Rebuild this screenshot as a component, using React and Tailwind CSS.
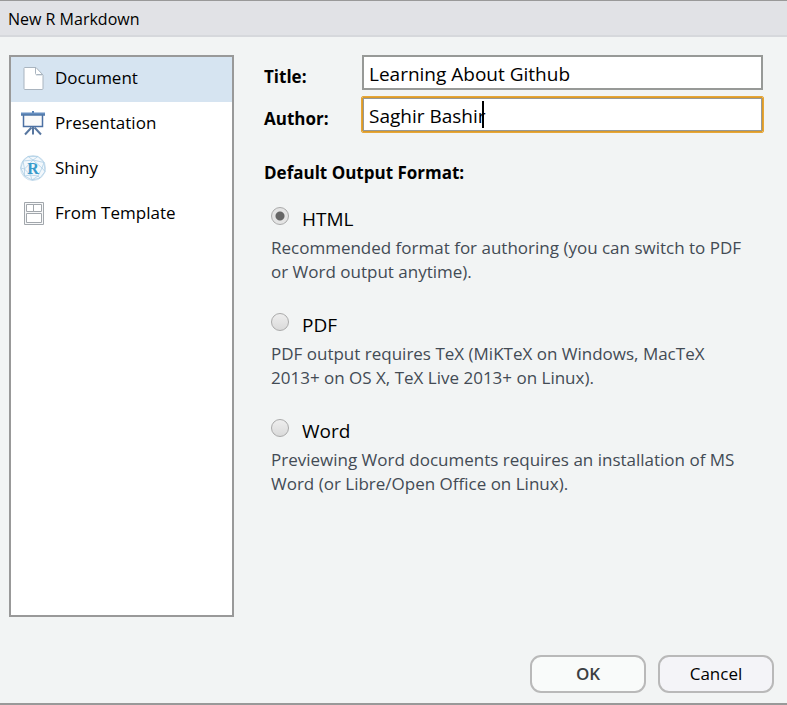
import { useState } from "react";

function DocumentIcon() {
  return (
    <svg width="26" height="26" viewBox="0 0 26 26" fill="none" aria-hidden="true">
      <path d="M4.500 2.500h11.500l7 7.500v13.500a1 1 0 0 1-1 1h-17a1 1 0 0 1-1-1v-20a1 1 0 0 1 .500-1z" fill="#fff" stroke="#a9b4bf" />
      <path d="M15.500 3v5.500a1 1 0 0 0 1 1h6" stroke="#a9b4bf" strokeLinejoin="round" />
      <path d="M16 10.500h6" stroke="#dfe5ea" />
    </svg>
  );
}

function PresentationIcon() {
  return (
    <svg width="26" height="26" viewBox="0 0 26 26" fill="none" aria-hidden="true">
      <path d="M12 1h2v2h-2z" fill="#5580b4" />
      <path d="M3.500 5v11.500h19V5" fill="#fafafa" stroke="#4b70a3" strokeWidth="1.500" />
      <path d="M1 2.500h24v3H1z" fill="#668fc0" />
      <path d="M1 4.500h24v1H1z" fill="#456a9b" />
      <path d="M13 17v7.500M11.500 17.500l-6.500 7M14.500 17.500l6.500 7" stroke="#5877a0" strokeWidth="2" />
    </svg>
  );
}

function ShinyIcon() {
  return (
    <svg width="26" height="26" viewBox="0 0 26 26" fill="none" aria-hidden="true">
      <circle cx="13" cy="13" r="12.500" fill="#f3f8fc" stroke="#cfe1ee" />
      <path
        d="M8 1.500l10 0 6 6 1 9-5 6.500-8 2-7.500-4L.800 13 3 6zM8 1.500l5 3.500 5-3.500M3 6l10-1 11 2.500M3 6l1.500 8L.800 13M4.500 14l0 7 6-1 1.500 5M13 5l9 8 2-5.500M22 13l3 3.500M22 13l-4 8 2 2M18 21l-7.500-1M4.500 14l6 6M18 21l-6 4M4.500 14l8.500-9"
        stroke="#afcfe6"
        strokeWidth="0.800"
      />
      <text x="13" y="18.500" textAnchor="middle" fontFamily="Liberation Serif, serif" fontSize="16" fontWeight="bold" fill="#3a9bcb">
        R
      </text>
    </svg>
  );
}

function TemplateIcon() {
  return (
    <svg width="26" height="26" viewBox="0 0 26 26" fill="none" stroke="#a2a7ac" aria-hidden="true">
      <path d="M4.500 2.500h19v22h-19z" fill="#f7f8f9" />
      <path d="M6.500 4.500h7v7h-7zM13.500 4.500h8v7h-8zM6.500 13.500h15v9h-15z" fill="#fff" />
    </svg>
  );
}

const templates = [
  { name: "Document", Icon: DocumentIcon },
  { name: "Presentation", Icon: PresentationIcon },
  { name: "Shiny", Icon: ShinyIcon },
  { name: "From Template", Icon: TemplateIcon },
];

const formats = [
  { name: "HTML", text: "Recommended format for authoring (you can switch to PDF or Word output anytime)." },
  { name: "PDF", text: "PDF output requires TeX (MiKTeX on Windows, MacTeX 2013+ on OS X, TeX Live 2013+ on Linux)." },
  { name: "Word", text: "Previewing Word documents requires an installation of MS Word (or Libre/Open Office on Linux)." },
];

export default function App() {
  const [template, setTemplate] = useState("Document");
  const [format, setFormat] = useState("HTML");
  const [title, setTitle] = useState("Learning About Github");
  const [author, setAuthor] = useState("Saghir Bashir");

  return (
    <div className="flex min-h-screen flex-col border-t border-b-2 border-t-[#999] border-b-[#999] bg-[#f2f4f4] font-['Open_Sans','Noto_Sans',sans-serif] text-black">
      <header className="flex h-9 items-center border-b-2 border-[#d6d8dc] bg-[#e1e2e6] px-2 pt-[2px]">
        <h1 className="text-[16px]">New R Markdown</h1>
      </header>

      <main className="flex grow gap-[30px] pt-[18px] pr-6 pl-[9px]">
        <ul className="h-[562px] w-[225px] shrink-0 border-2 border-[#999] bg-white">
          {templates.map(({ name, Icon }) => (
            <li key={name}>
              <button
                type="button"
                onClick={() => setTemplate(name)}
                className={`flex h-[45px] w-full items-center gap-[9px] pb-1 pl-[9px] text-left text-[17px] ${
                  template === name ? "bg-[#d6e4f1]" : "bg-white"
                }`}
              >
                <Icon />
                {name}
              </button>
            </li>
          ))}
        </ul>

        <form className="min-w-0 grow">
          <div className="grid grid-cols-[98px_1fr] items-center gap-y-[7px]">
            <label htmlFor="title" className="pt-2 text-[17px] font-bold">
              Title:
            </label>
            <input
              id="title"
              value={title}
              onChange={(e) => setTitle(e.target.value)}
              className="h-[35px] w-full border-2 border-[#979997] bg-white px-[5px] pt-[2px] text-[19px] outline-none"
            />
            <label htmlFor="author" className="pt-2 text-[17px] font-bold">
              Author:
            </label>
            <div className="relative">
              <input
                id="author"
                value={author}
                onChange={(e) => setAuthor(e.target.value)}
                className="block h-[35px] w-full rounded-[1px] border border-[#dc9a28] bg-white px-[6px] pt-[2px] text-[19px] caret-transparent inset-ring inset-ring-[#979997] outline outline-[#e5a638]"
              />
              <span className="absolute top-1 left-[120px] h-[27px] w-[2px] bg-black" />
            </div>
          </div>

          <fieldset className="mt-7">
            <legend className="text-[17px] font-bold">Default Output Format:</legend>
            <div className="mt-5 mr-4 ml-[7px] flex flex-col gap-7">
              {formats.map(({ name, text }) => (
                <div key={name} className="flex flex-col gap-[2px]">
                  <label className="flex h-7 items-center gap-[13px] text-[19px]">
                    <input
                      type="radio"
                      name="format"
                      value={name}
                      checked={format === name}
                      onChange={() => setFormat(name)}
                      aria-describedby={`${name}-note`}
                      className="mb-2 size-[18px] appearance-none rounded-full border border-[#aaa] bg-linear-to-b from-[#eee] to-[#dadada] checked:bg-[radial-gradient(circle,#666_4px,#e4e4e4_5px)]"
                    />
                    {name}
                  </label>
                  <p id={`${name}-note`} className="text-[17px] leading-6 text-[#434b54]">
                    {text}
                  </p>
                </div>
              ))}
            </div>
          </fieldset>
        </form>
      </main>

      <footer className="flex justify-end gap-3 pr-[13px] pb-[10px]">
        <button type="button" className="h-[38px] w-[116px] rounded-[11px] border-2 border-[#b9b9b9] bg-[#f9fbfa] text-[17px] font-semibold text-[#3c3f42]">
          OK
        </button>
        <button type="button" className="h-[38px] w-[116px] rounded-[11px] border-2 border-[#b9b9b9] bg-[#f4f4f8] text-[17px]">
          Cancel
        </button>
      </footer>
    </div>
  );
}
